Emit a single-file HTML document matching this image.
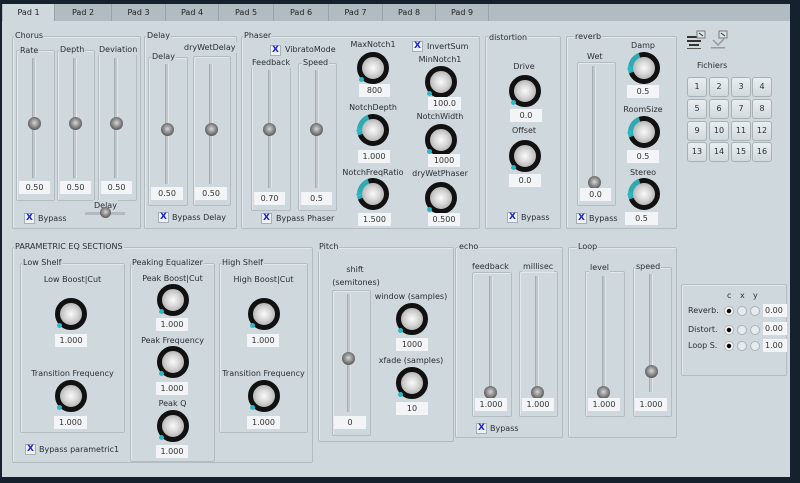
<!DOCTYPE html>
<html><head><meta charset="utf-8"><style>
*{box-sizing:border-box;margin:0;padding:0}
body{width:800px;height:483px;background:#15212c;position:relative;overflow:hidden;font-family:"DejaVu Sans","Liberation Sans",sans-serif;font-size:8px;color:#2a2f33}
#main{position:absolute;left:2px;top:4px;width:788px;height:473px;background:#cfd8dd}
#tabbar{position:absolute;left:2px;top:4px;width:788px;height:17px;background:#b1bcc2}
.tab{position:absolute;top:4px;height:17px;line-height:17px;text-align:center;border-right:1px solid #9aa5ab;font-size:8px;color:#222}
.tab.a{background:#cfd8dd}
.g{position:absolute;border:1px solid #b3bcc1;border-radius:2px;box-shadow:inset 1px 1px 0 #e2e8eb}
.t{position:absolute;white-space:nowrap;background:#cfd8dd;padding:0 1px;line-height:11px}
.c{position:absolute;white-space:nowrap;text-align:center;line-height:11px}
.v{position:absolute;background:#f2f4f5;text-align:center;height:13px;line-height:13px;font-size:8px;color:#333}
.gr{position:absolute;width:4px;background:#bfc7cb;border-left:1px solid #a3adb2;border-right:1px solid #e1e6e8}
.h{position:absolute;width:13px;height:13px;border-radius:50%;background:radial-gradient(circle at 50% 45%,#d5d5d5 0,#999 35%,#555 75%,#333 100%)}
.k{position:absolute;width:32px;height:32px;border-radius:50%;border:5px solid #111;background:radial-gradient(circle at 50% 50%,#fafafa 0,#d8d8d8 40%,#9a9a9a 100%)}
.k::after{content:"";position:absolute;left:-3px;bottom:-3px;width:5px;height:5px;border-radius:50%;background:#2cb8c8}
.k.ar{border-left-color:#2fa9b3;transform:rotate(25deg)}
.k.ar::after{left:-4px;bottom:2px}
.cb{position:absolute;width:11px;height:11px;background:#eef2f4;border:1px solid #a5b0b6;color:#1a22e0;font-weight:bold;font-size:9px;line-height:9px;text-align:center}
.bt{position:absolute;width:20px;height:20px;border:1px solid #a7b1b6;border-radius:3px;background:linear-gradient(#e9eef0,#d1d9dd);text-align:center;line-height:18px;font-size:8px}
.rd{position:absolute;width:10px;height:10px;border-radius:50%;border:1px solid #aab3b8;background:#e6ebee}
.rd.on{background:radial-gradient(circle,#000 0,#000 35%,#fff 45%)}
</style></head><body>
<div id="main"></div>
<div id="tabbar"></div>
<div class="tab a" style="left:3px;width:52px">Pad 1</div>
<div class="tab" style="left:55px;width:57px">Pad 2</div>
<div class="tab" style="left:112px;width:54px">Pad 3</div>
<div class="tab" style="left:166px;width:53px">Pad 4</div>
<div class="tab" style="left:219px;width:55px">Pad 5</div>
<div class="tab" style="left:274px;width:55px">Pad 6</div>
<div class="tab" style="left:329px;width:54px">Pad 7</div>
<div class="tab" style="left:383px;width:53px">Pad 8</div>
<div class="tab" style="left:436px;width:53px">Pad 9</div>

<!-- Chorus -->
<div class="g" style="left:12px;top:36px;width:129px;height:193px"></div>
<div class="t" style="left:14px;top:30px">Chorus</div>
<div class="g" style="left:16px;top:50px;width:39px;height:151px"></div><div class="t" style="left:19px;top:45px">Rate</div>
<div class="g" style="left:57px;top:50px;width:38px;height:151px"></div><div class="t" style="left:59px;top:44px">Depth</div>
<div class="g" style="left:98px;top:50px;width:39px;height:151px"></div><div class="t" style="left:98px;top:44px">Deviation</div>
<div class="gr" style="left:32px;top:58px;height:120px"></div><div class="h" style="left:28px;top:117px"></div>
<div class="gr" style="left:73px;top:58px;height:120px"></div><div class="h" style="left:69px;top:117px"></div>
<div class="gr" style="left:114px;top:58px;height:120px"></div><div class="h" style="left:110px;top:117px"></div>
<div class="v" style="left:19px;top:181px;width:31px">0.50</div>
<div class="v" style="left:60px;top:181px;width:31px">0.50</div>
<div class="v" style="left:101px;top:181px;width:31px">0.50</div>
<div class="cb" style="left:24px;top:213px">X</div><div class="t" style="left:37px;top:213px">Bypass</div>
<div class="t" style="left:93px;top:200px">Delay</div>
<div style="position:absolute;left:85px;top:212px;width:40px;height:3px;background:#b2babe"></div>
<div class="h" style="left:100px;top:207px;width:11px;height:11px"></div>

<!-- Delay -->
<div class="g" style="left:144px;top:36px;width:93px;height:193px"></div>
<div class="t" style="left:146px;top:30px">Delay</div>
<div class="g" style="left:148px;top:57px;width:40px;height:149px"></div><div class="t" style="left:151px;top:51px">Delay</div>
<div class="g" style="left:193px;top:56px;width:38px;height:150px"></div><div class="t" style="left:183px;top:42px">dryWetDelay</div>
<div class="gr" style="left:165px;top:64px;height:120px"></div><div class="h" style="left:161px;top:123px"></div>
<div class="gr" style="left:209px;top:64px;height:120px"></div><div class="h" style="left:205px;top:123px"></div>
<div class="v" style="left:151px;top:187px;width:32px">0.50</div>
<div class="v" style="left:195px;top:187px;width:32px">0.50</div>
<div class="cb" style="left:158px;top:212px">X</div><div class="t" style="left:171px;top:212px">Bypass Delay</div>

<!-- Phaser -->
<div class="g" style="left:241px;top:36px;width:239px;height:193px"></div>
<div class="t" style="left:243px;top:30px">Phaser</div>
<div class="cb" style="left:270px;top:45px">X</div><div class="t" style="left:284px;top:44px">VibratoMode</div>
<div class="g" style="left:251px;top:63px;width:40px;height:148px"></div><div class="t" style="left:251px;top:57px">Feedback</div>
<div class="g" style="left:298px;top:63px;width:39px;height:148px"></div><div class="t" style="left:302px;top:57px">Speed</div>
<div class="gr" style="left:268px;top:70px;height:118px"></div><div class="h" style="left:263px;top:123px"></div>
<div class="gr" style="left:315px;top:70px;height:118px"></div><div class="h" style="left:310px;top:123px"></div>
<div class="v" style="left:254px;top:192px;width:31px">0.70</div>
<div class="v" style="left:301px;top:192px;width:31px">0.5</div>
<div class="cb" style="left:261px;top:213px">X</div><div class="t" style="left:275px;top:213px">Bypass Phaser</div>
<div class="c" style="left:333px;top:39px;width:80px">MaxNotch1</div>
<div class="k" style="left:357px;top:52px"></div><div class="v" style="left:359px;top:84px;width:31px">800</div>
<div class="c" style="left:333px;top:102px;width:80px">NotchDepth</div>
<div class="k ar" style="left:357px;top:114px"></div><div class="v" style="left:358px;top:150px;width:32px">1.000</div>
<div class="c" style="left:333px;top:167px;width:80px">NotchFreqRatio</div>
<div class="k ar" style="left:357px;top:178px"></div><div class="v" style="left:358px;top:213px;width:33px">1.500</div>
<div class="cb" style="left:412px;top:41px">X</div><div class="t" style="left:426px;top:41px">InvertSum</div>
<div class="c" style="left:400px;top:54px;width:80px">MinNotch1</div>
<div class="k" style="left:425px;top:66px"></div><div class="v" style="left:428px;top:97px;width:33px">100.0</div>
<div class="c" style="left:400px;top:111px;width:80px">NotchWidth</div>
<div class="k" style="left:425px;top:124px"></div><div class="v" style="left:428px;top:154px;width:32px">1000</div>
<div class="c" style="left:400px;top:168px;width:80px">dryWetPhaser</div>
<div class="k" style="left:425px;top:182px"></div><div class="v" style="left:428px;top:213px;width:32px">0.500</div>

<!-- distortion -->
<div class="g" style="left:485px;top:36px;width:76px;height:193px"></div>
<div class="t" style="left:488px;top:32px">distortion</div>
<div class="c" style="left:494px;top:61px;width:60px">Drive</div>
<div class="k" style="left:509px;top:75px"></div><div class="v" style="left:510px;top:109px;width:32px">0.0</div>
<div class="c" style="left:494px;top:125px;width:60px">Offset</div>
<div class="k" style="left:509px;top:140px"></div><div class="v" style="left:509px;top:174px;width:32px">0.0</div>
<div class="cb" style="left:507px;top:212px">X</div><div class="t" style="left:520px;top:212px">Bypass</div>

<!-- reverb -->
<div class="g" style="left:566px;top:36px;width:111px;height:193px"></div>
<div class="t" style="left:574px;top:31px">reverb</div>
<div class="t" style="left:586px;top:51px">Wet</div>
<div class="g" style="left:577px;top:62px;width:39px;height:144px"></div>
<div class="gr" style="left:592px;top:66px;height:118px"></div><div class="h" style="left:588px;top:176px"></div>
<div class="v" style="left:580px;top:188px;width:31px">0.0</div>
<div class="cb" style="left:576px;top:213px">X</div><div class="t" style="left:588px;top:213px">Bypass</div>
<div class="c" style="left:615px;top:40px;width:56px">Damp</div>
<div class="k ar" style="left:628px;top:52px"></div><div class="v" style="left:627px;top:85px;width:32px">0.5</div>
<div class="c" style="left:615px;top:104px;width:56px">RoomSize</div>
<div class="k ar" style="left:628px;top:116px"></div><div class="v" style="left:627px;top:150px;width:32px">0.5</div>
<div class="c" style="left:615px;top:167px;width:56px">Stereo</div>
<div class="k ar" style="left:628px;top:178px"></div><div class="v" style="left:625px;top:212px;width:33px">0.5</div>

<!-- icons -->
<svg style="position:absolute;left:686px;top:29px" width="50" height="22">
<rect x="1" y="7" width="14" height="2" fill="#333"/><rect x="1" y="11" width="14" height="2" fill="#333"/><rect x="3" y="15" width="10" height="2" fill="#333"/><rect x="1" y="19" width="14" height="1" fill="#555"/>
<rect x="11" y="2" width="8" height="7" fill="#dde2e4" stroke="#777" stroke-width="1"/><path d="M13 4 L17 7" stroke="#333"/>
<path d="M27 11 L32 16 L38 10" stroke="#999" fill="none" stroke-width="1.5"/><rect x="25" y="18" width="14" height="1.5" fill="#999"/>
<rect x="33" y="2" width="8" height="7" fill="#dde2e4" stroke="#777" stroke-width="1"/><path d="M35 4 L39 7" stroke="#333"/>
</svg>
<div class="t" style="left:696px;top:60px">Fichiers</div>
<div class="bt" style="left:687px;top:77px">1</div><div class="bt" style="left:709px;top:77px">2</div><div class="bt" style="left:731px;top:77px">3</div><div class="bt" style="left:752px;top:77px">4</div>
<div class="bt" style="left:687px;top:99px">5</div><div class="bt" style="left:709px;top:99px">6</div><div class="bt" style="left:731px;top:99px">7</div><div class="bt" style="left:752px;top:99px">8</div>
<div class="bt" style="left:687px;top:121px">9</div><div class="bt" style="left:709px;top:121px">10</div><div class="bt" style="left:731px;top:121px">11</div><div class="bt" style="left:752px;top:121px">12</div>
<div class="bt" style="left:687px;top:142px">13</div><div class="bt" style="left:709px;top:142px">14</div><div class="bt" style="left:731px;top:142px">15</div><div class="bt" style="left:752px;top:142px">16</div>

<!-- parametric EQ -->
<div class="g" style="left:12px;top:247px;width:301px;height:216px"></div>
<div class="t" style="left:14px;top:241px">PARAMETRIC EQ SECTIONS</div>
<div class="g" style="left:20px;top:263px;width:105px;height:170px"></div><div class="t" style="left:22px;top:257px">Low Shelf</div>
<div class="c" style="left:20px;top:274px;width:105px">Low Boost|Cut</div>
<div class="k" style="left:55px;top:298px"></div><div class="v" style="left:55px;top:334px;width:32px">1.000</div>
<div class="c" style="left:20px;top:368px;width:105px">Transition Frequency</div>
<div class="k" style="left:55px;top:380px"></div><div class="v" style="left:54px;top:416px;width:33px">1.000</div>
<div class="cb" style="left:25px;top:444px">X</div><div class="t" style="left:38px;top:444px">Bypass parametric1</div>
<div class="g" style="left:130px;top:263px;width:85px;height:199px"></div><div class="t" style="left:131px;top:257px">Peaking Equalizer</div>
<div class="c" style="left:130px;top:273px;width:85px">Peak Boost|Cut</div>
<div class="k" style="left:157px;top:284px"></div><div class="v" style="left:156px;top:318px;width:32px">1.000</div>
<div class="c" style="left:130px;top:335px;width:85px">Peak Frequency</div>
<div class="k" style="left:157px;top:346px"></div><div class="v" style="left:156px;top:382px;width:32px">1.000</div>
<div class="c" style="left:130px;top:398px;width:85px">Peak Q</div>
<div class="k" style="left:157px;top:410px"></div><div class="v" style="left:156px;top:445px;width:32px">1.000</div>
<div class="g" style="left:219px;top:263px;width:89px;height:170px"></div><div class="t" style="left:221px;top:257px">High Shelf</div>
<div class="c" style="left:219px;top:274px;width:89px">High Boost|Cut</div>
<div class="k" style="left:248px;top:298px"></div><div class="v" style="left:247px;top:334px;width:32px">1.000</div>
<div class="c" style="left:219px;top:368px;width:89px">Transition Frequency</div>
<div class="k" style="left:248px;top:380px"></div><div class="v" style="left:247px;top:416px;width:33px">1.000</div>

<!-- Pitch -->
<div class="g" style="left:318px;top:247px;width:136px;height:195px"></div>
<div class="t" style="left:318px;top:241px">Pitch</div>
<div class="c" style="left:320px;top:264px;width:70px">shift</div>
<div class="c" style="left:320px;top:277px;width:72px">(semitones)</div>
<div class="g" style="left:332px;top:290px;width:39px;height:146px"></div>
<div class="gr" style="left:347px;top:294px;height:118px"></div><div class="h" style="left:342px;top:352px"></div>
<div class="v" style="left:334px;top:416px;width:32px">0</div>
<div class="c" style="left:371px;top:291px;width:80px">window (samples)</div>
<div class="k" style="left:396px;top:303px"></div><div class="v" style="left:396px;top:338px;width:32px">1000</div>
<div class="c" style="left:371px;top:355px;width:80px">xfade (samples)</div>
<div class="k" style="left:396px;top:367px"></div><div class="v" style="left:396px;top:402px;width:32px">10</div>

<!-- echo -->
<div class="g" style="left:455px;top:247px;width:108px;height:191px"></div>
<div class="t" style="left:458px;top:241px">echo</div>
<div class="g" style="left:472px;top:272px;width:40px;height:145px"></div><div class="t" style="left:471px;top:261px">feedback</div>
<div class="g" style="left:519px;top:271px;width:39px;height:146px"></div><div class="t" style="left:522px;top:261px">millisec</div>
<div class="gr" style="left:489px;top:276px;height:118px"></div><div class="h" style="left:484px;top:386px"></div>
<div class="gr" style="left:535px;top:276px;height:118px"></div><div class="h" style="left:531px;top:386px"></div>
<div class="v" style="left:475px;top:398px;width:32px">1.000</div>
<div class="v" style="left:522px;top:398px;width:32px">1.000</div>
<div class="cb" style="left:476px;top:423px">X</div><div class="t" style="left:489px;top:423px">Bypass</div>

<!-- Loop -->
<div class="g" style="left:568px;top:247px;width:109px;height:191px"></div>
<div class="t" style="left:577px;top:241px">Loop</div>
<div class="g" style="left:585px;top:271px;width:40px;height:146px"></div><div class="t" style="left:589px;top:262px">level</div>
<div class="g" style="left:633px;top:267px;width:39px;height:150px"></div><div class="t" style="left:635px;top:261px">speed</div>
<div class="gr" style="left:602px;top:276px;height:118px"></div><div class="h" style="left:597px;top:386px"></div>
<div class="gr" style="left:649px;top:274px;height:118px"></div><div class="h" style="left:645px;top:365px"></div>
<div class="v" style="left:588px;top:398px;width:32px">1.000</div>
<div class="v" style="left:635px;top:398px;width:32px">1.000</div>

<!-- matrix -->
<div class="g" style="left:681px;top:284px;width:106px;height:92px"></div>
<div class="t" style="left:726px;top:290px;background:none">c</div>
<div class="t" style="left:739px;top:290px;background:none">x</div>
<div class="t" style="left:752px;top:290px;background:none">y</div>
<div class="t" style="left:687px;top:305px;background:none">Reverb.</div>
<div class="t" style="left:687px;top:324px;background:none">Distort.</div>
<div class="t" style="left:687px;top:340px;background:none">Loop S.</div>
<div class="rd on" style="left:724px;top:306px"></div><div class="rd" style="left:737px;top:306px"></div><div class="rd" style="left:750px;top:306px"></div>
<div class="rd on" style="left:724px;top:325px"></div><div class="rd" style="left:737px;top:325px"></div><div class="rd" style="left:750px;top:325px"></div>
<div class="rd on" style="left:724px;top:341px"></div><div class="rd" style="left:737px;top:341px"></div><div class="rd" style="left:750px;top:341px"></div>
<div class="v" style="left:763px;top:304px;width:24px;text-align:left;padding-left:2px">0.00</div>
<div class="v" style="left:763px;top:322px;width:24px;text-align:left;padding-left:2px">0.00</div>
<div class="v" style="left:763px;top:339px;width:24px;text-align:left;padding-left:2px">1.00</div>
</body></html>
